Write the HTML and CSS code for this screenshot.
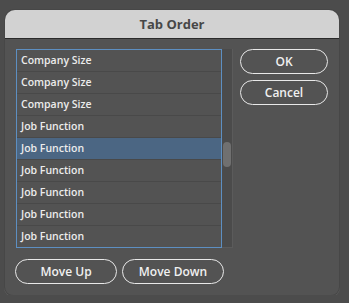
FILE: index.html
```html
<!DOCTYPE html>
<html lang="en">
<head>
    <meta charset="UTF-8">
    <title>Tab Order</title>
    <link rel="stylesheet" href="styles.css">
</head>
<body>

<div class="dialog">
    <div class="titlebar">Tab Order</div>
    <div class="content">
        <div class="main">
            <div class="listwrap">
                <ul class="list">
                    <li>Company Size</li>
                    <li>Company Size</li>
                    <li>Company Size</li>
                    <li>Job Function</li>
                    <li class="selected">Job Function</li>
                    <li>Job Function</li>
                    <li>Job Function</li>
                    <li>Job Function</li>
                    <li>Job Function</li>
                </ul>
                <div class="scrollbar">
                    <div class="thumb"></div>
                </div>
            </div>
            <div class="side">
                <button class="btn">OK</button>
                <button class="btn">Cancel</button>
            </div>
        </div>
        <div class="bottom">
            <button class="btn wide">Move Up</button>
            <button class="btn wide">Move Down</button>
        </div>
    </div>
</div>

</body>
</html>
```

FILE: styles.css
```css
body {
    margin: 0;
    background-color: #4c4c4c;
    font-family: "Open Sans", sans-serif;
}

.dialog {
    margin: 10px 0 0 5px;
    width: 334px;
    height: 285px;
    background-color: #535353;
    border-radius: 10px 10px 8px 8px;
    box-shadow: 0 0 0 1px #474747, 0 1px 0 1px #5e5e5e;
    overflow: hidden;
}

.titlebar {
    height: 28px;
    line-height: 29px;
    background-color: #d2d2d2;
    border-bottom: 1px solid #2a2a2a;
    text-align: center;
    font-size: 13px;
    font-weight: 700;
    color: #474747;
}

.content {
    padding: 10px 0 0 11px;
}

.main {
    display: flex;
}

.listwrap {
    display: flex;
}

.list {
    list-style: none;
    margin: 0;
    padding: 0;
    width: 204px;
    border: 1px solid #5d8fc2;
    background-color: #535353;
}

.list li {
    height: 21px;
    line-height: 21px;
    padding-left: 4px;
    font-size: 10.5px;
    font-weight: 600;
    color: #ececec;
    border-bottom: 1px solid #494949;
}

.list li:last-child {
    border-bottom: none;
}

.list li.selected {
    background-color: #4b6683;
}

.scrollbar {
    width: 11px;
    background-color: #4b4b4b;
    border-right: 1px solid #5b5b5b;
    border-bottom: 1px solid #5b5b5b;
    box-sizing: border-box;
    padding-top: 93px;
}

.thumb {
    margin-left: 1px;
    width: 8px;
    height: 25px;
    border-radius: 4px;
    background-color: #707070;
}

.side {
    display: flex;
    flex-direction: column;
    gap: 6px;
    margin-left: 7px;
}

.btn {
    width: 88px;
    height: 25px;
    padding: 0;
    background-color: #535353;
    border: 1.5px solid #e8e8e8;
    border-radius: 13px;
    color: #f0f0f0;
    font-family: "Open Sans", sans-serif;
    font-size: 12px;
    font-weight: 600;
    box-sizing: border-box;
}

.bottom {
    display: flex;
    gap: 5px;
    margin-top: 11px;
    margin-left: -1px;
}

.btn.wide {
    width: 102px;
}
```
